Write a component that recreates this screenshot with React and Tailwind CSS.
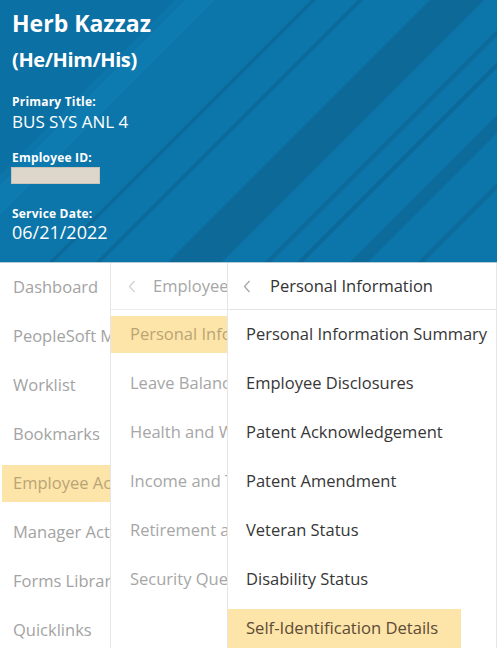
import React from "react";

const F = { fontFamily: '"Open Sans", "Noto Sans", sans-serif' };

function Chevron({ color }) {
  return (
    <svg width="8" height="13" viewBox="0 0 8 13" className="shrink-0">
      <polyline points="6.5,1 1.5,6.5 6.5,12" fill="none" stroke={color} strokeWidth="1.3" />
    </svg>
  );
}

function Stripes() {
  const H = 300;
  const band = (c1, c2, fill, key) => (
    <polygon
      key={key}
      points={`${c1},0 ${c2},0 ${c2 - H},${H} ${c1 - H},${H}`}
      fill={fill}
    />
  );
  return (
    <svg className="absolute inset-0" width="497" height="262" viewBox="0 0 497 262">
      <rect width="497" height="262" fill="#0c75a9" />
      {band(-300, 175, "#0b70a3", "a")}
      {band(185, 215, "#0e7bb0", "b")}
      {band(311, 316, "#0c6a9a", "c")}
      {band(358, 363, "#0c6a9a", "d")}
      {band(430, 484, "#0c6998", "e")}
      {band(527, 533, "#0c6b9b", "f")}
      {band(559, 565, "#0c6a9a", "g")}
      {band(612, 630, "#0c6b9b", "h")}
      {band(680, 686, "#0c6b9b", "i")}
    </svg>
  );
}

const col1 = ["Dashboard", "PeopleSoft Menu", "Worklist", "Bookmarks", "Employee Actions", "Manager Actions", "Forms Library", "Quicklinks"];
const col2 = ["Personal Information", "Leave Balances", "Health and Wellness", "Income and Taxes", "Retirement and Savings", "Security Questions"];
const col3 = ["Personal Information Summary", "Employee Disclosures", "Patent Acknowledgement", "Patent Amendment", "Veteran Status", "Disability Status", "Self-Identification Details"];

export default function App() {
  return (
    <div className="w-[498px] h-[648px] overflow-hidden bg-white" style={F}>
      <div className="w-[497px]">
        <header className="relative h-[262px] overflow-hidden border-b border-[#b3c9d6] box-content">
          <Stripes />
          <div className="relative flex flex-col items-start pl-[12px] text-white">
            <div className="mt-[8px] h-[30px] text-[23px] leading-[30px] font-bold">Herb Kazzaz</div>
            <div className="mt-[8px] h-[28px] text-[20px] leading-[28px] font-bold tracking-[-0.4px]">(He/Him/His)</div>
            <div className="mt-[20px] h-[16px] text-[12px] leading-[16px] font-bold tracking-[0.2px]">Primary Title:</div>
            <div className="mt-[1px] h-[22px] text-[17px] leading-[22px]">BUS SYS ANL 4</div>
            <div className="mt-[17px] h-[16px] text-[12px] leading-[16px] font-bold tracking-[0.2px]">Employee ID:</div>
            <div className="mt-[1px] -ml-[1px] w-[89px] h-[17px] bg-[#ddd6cb] border border-[#cbc3b8]" />
            <div className="mt-[22px] h-[16px] text-[12px] leading-[16px] font-bold tracking-[0.2px]">Service Date:</div>
            <div className="-mt-[1px] h-[22px] text-[18px] leading-[22px]">06/21/2022</div>
          </div>
        </header>

        <div className="flex h-[386px]">
          <nav className="w-[111px] shrink-0 border-r border-[#e6e6e6] overflow-hidden">
            {col1.map((t, i) => (
              <div key={t} className="h-[49px] flex items-center">
                {i === 4 ? (
                  <div className="ml-[2px] h-[37px] w-full flex items-center pl-[11px] bg-[#fde4a8] text-[#b9a476] text-[16.5px] whitespace-nowrap">
                    {t}
                  </div>
                ) : (
                  <div className="pl-[13px] text-[16.5px] text-[#a3a3a3] whitespace-nowrap">{t}</div>
                )}
              </div>
            ))}
          </nav>

          <nav className="w-[117px] shrink-0 border-r border-[#e6e6e6] overflow-hidden">
            <div className="h-[47px] border-b border-[#ececec] flex items-center pl-[17px] gap-[17px] whitespace-nowrap">
              <Chevron color="#d2d2d2" />
              <span className="text-[16.5px] text-[#a6a6a6]">Employee Actions</span>
            </div>
            {col2.map((t, i) => (
              <div key={t} className="h-[49px] flex items-center">
                {i === 0 ? (
                  <div className="h-[37px] w-full flex items-center pl-[19px] bg-[#fde4a8] text-[#b9a476] text-[16.5px] whitespace-nowrap">
                    {t}
                  </div>
                ) : (
                  <div className="pl-[19px] text-[16.5px] text-[#a6a6a6] whitespace-nowrap">{t}</div>
                )}
              </div>
            ))}
          </nav>

          <nav className="flex-1 border-r border-[#e6e6e6] overflow-hidden">
            <div className="h-[47px] border-b border-[#e4e4e4] flex items-center pl-[15px] gap-[19px] whitespace-nowrap">
              <Chevron color="#a8a8a8" />
              <span className="text-[16.5px] text-[#333333]">Personal Information</span>
            </div>
            {col3.map((t, i) => (
              <div key={t} className="h-[49px] flex items-center">
                {i === 6 ? (
                  <div className="h-[39px] flex items-center pl-[18px] pr-[23px] bg-[#fde4a8] text-[#5c4b36] text-[16.6px] whitespace-nowrap">
                    {t}
                  </div>
                ) : (
                  <div className="pl-[18px] text-[16.5px] text-[#363636] whitespace-nowrap">{t}</div>
                )}
              </div>
            ))}
          </nav>
        </div>
      </div>
    </div>
  );
}
